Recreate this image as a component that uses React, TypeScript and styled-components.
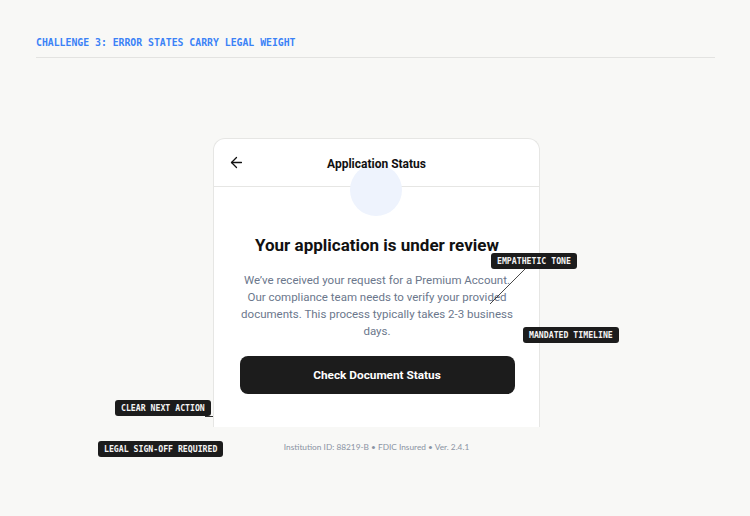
import React from "react";
import styled, { createGlobalStyle } from "styled-components";
import { ArrowLeft } from "lucide-react";

const GlobalStyle = createGlobalStyle`
  html, body { margin: 0; padding: 0; background: #f8f8f6; }
  body { font-family: "Roboto", "Noto Sans", sans-serif; }
  * { box-sizing: border-box; }
`;

const mono = `"DejaVu Sans Mono", "Liberation Mono", monospace`;
const small = `"Lato", "Roboto", sans-serif`;

const Page = styled.div`
  position: relative;
  width: 750px;
  height: 516px;
  padding: 37px 35px 0 36px;
  overflow: hidden;
`;

const TopBar = styled.div`
  font-family: ${mono};
  font-weight: 700;
  font-size: 9.8px;
  color: #3b82f6;
  padding-bottom: 9px;
  border-bottom: 1px solid #e3e3e1;
`;

const Stage = styled.div`
  display: flex;
  flex-direction: column;
  align-items: center;
  padding-top: 80px;
  padding-left: 2px;
`;

const Card = styled.div`
  position: relative;
  width: 327px;
  height: 289px;
  background: #ffffff;
  border: 1px solid #e6e6e4;
  border-bottom: none;
  border-radius: 12px 12px 0 0;
  overflow: hidden;
`;

const CardHeader = styled.div`
  display: grid;
  grid-template-columns: 24px 1fr 24px;
  align-items: center;
  height: 48px;
  padding: 0 14px;
  border-bottom: 1px solid #e6e6e4;
`;

const BackButton = styled.span`
  position: relative;
  z-index: 2;
  display: flex;
  align-items: center;
  color: #111;
`;

const HeaderTitle = styled.div`
  position: relative;
  z-index: 2;
  text-align: center;
  font-size: 12px;
  font-weight: 700;
  color: #111;
  padding-top: 2px;
`;

const Halo = styled.div`
  position: absolute;
  z-index: 1;
  left: 136px;
  top: 25px;
  width: 52px;
  height: 52px;
  border-radius: 50%;
  background: #eef3fd;
`;

const Body = styled.div`
  display: flex;
  flex-direction: column;
  align-items: center;
  padding: 47px 25px 0 26px;
`;

const Title = styled.h1`
  margin: 0 0 16px;
  font-size: 17px;
  line-height: 22px;
  font-weight: 700;
  color: #111;
  text-align: center;
  white-space: nowrap;
`;

const Message = styled.p`
  margin: 0 0 16px;
  font-size: 11.5px;
  line-height: 17px;
  color: #6b778c;
  text-align: center;
  white-space: nowrap;
`;

const PrimaryButton = styled.button`
  width: 275px;
  height: 38px;
  flex-shrink: 0;
  border: none;
  border-radius: 8px;
  background: #1c1c1c;
  color: #fff;
  font-family: inherit;
  font-size: 11.8px;
  font-weight: 700;
`;

const Footer = styled.div`
  margin-top: 15px;
  font-family: ${small};
  font-size: 8.3px;
  color: #8a93a3;
`;

const Tag = styled.div<{ $x: number; $y: number }>`
  position: absolute;
  left: ${(p) => p.$x}px;
  top: ${(p) => p.$y}px;
  height: 16px;
  padding: 0 6px;
  display: flex;
  align-items: center;
  background: #1c1c1c;
  color: #f4f4f4;
  font-family: ${mono};
  font-size: 8.2px;
  font-weight: 700;
  border-radius: 3px;
  white-space: nowrap;
  z-index: 5;
`;

const Connector = styled.svg`
  position: absolute;
  left: 0;
  top: 0;
  pointer-events: none;
  z-index: 4;
`;

export default function App() {
  return (
    <>
      <GlobalStyle />
      <Page>
        <TopBar>CHALLENGE 3: ERROR STATES CARRY LEGAL WEIGHT</TopBar>
        <Stage>
          <Card>
            <CardHeader>
              <BackButton>
                <ArrowLeft size={17} strokeWidth={1.8} />
              </BackButton>
              <HeaderTitle>Application Status</HeaderTitle>
              <span />
            </CardHeader>
            <Halo />
            <Body>
              <Title>Your application is under review</Title>
              <Message>
                We’ve received your request for a Premium Account.
                <br />
                Our compliance team needs to verify your provided
                <br />
                documents. This process typically takes 2-3 business
                <br />
                days.
              </Message>
              <PrimaryButton>Check Document Status</PrimaryButton>
            </Body>
          </Card>
          <Footer>Institution ID: 88219-B • FDIC Insured • Ver. 2.4.1</Footer>
        </Stage>

        <Connector width="750" height="516">
          <line x1="525" y1="269" x2="490" y2="304" stroke="#333" strokeWidth="0.9" />
          <line x1="205" y1="416.5" x2="213" y2="416.5" stroke="#333" strokeWidth="1" />
        </Connector>
        <Tag $x={491} $y={253}>EMPATHETIC TONE</Tag>
        <Tag $x={523} $y={327}>MANDATED TIMELINE</Tag>
        <Tag $x={115} $y={400}>CLEAR NEXT ACTION</Tag>
        <Tag $x={98} $y={441}>LEGAL SIGN-OFF REQUIRED</Tag>
      </Page>
    </>
  );
}
